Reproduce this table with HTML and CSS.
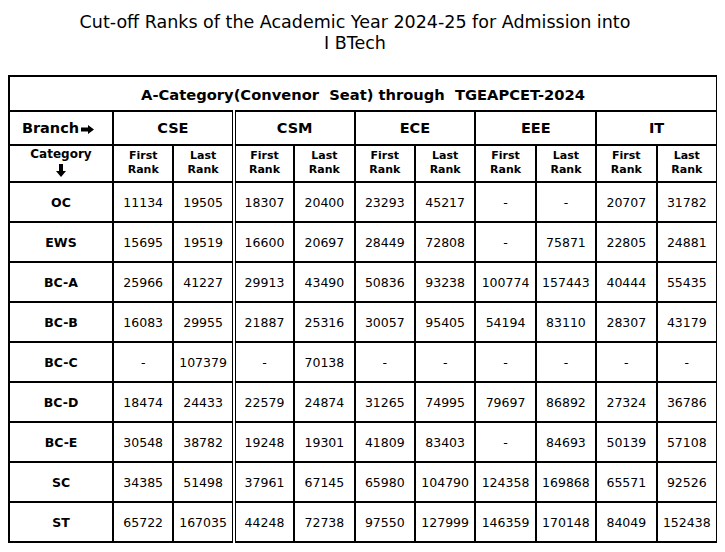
FILE: index.html
```html
<!DOCTYPE html>
<html>
<head>
<meta charset="utf-8">
<link rel="stylesheet" href="styles.css">
</head>
<body>
<h1 class="title">Cut-off Ranks of the Academic Year 2024-25 for Admission into<br>I BTech</h1>
<table class="ranks">
  <colgroup>
    <col class="c-cat">
    <col span="10" class="c-num">
  </colgroup>
  <tr class="r-title">
    <th colspan="11">A-Category(Convenor&nbsp; Seat) through&nbsp; TGEAPCET-2024</th>
  </tr>
  <tr class="r-branch">
    <th class="branch">Branch<svg class="arr-r" viewBox="0 0 13 9" width="13" height="9"><path d="M0 2.5h7V0l6 4.5-6 4.5V6.5H0z"/></svg></th>
    <th colspan="2" class="dbl">CSE</th>
    <th colspan="2">CSM</th>
    <th colspan="2">ECE</th>
    <th colspan="2">EEE</th>
    <th colspan="2">IT</th>
  </tr>
  <tr class="r-sub">
    <th class="cat">Category<br><svg class="arr-d" viewBox="0 0 10 13" width="10" height="13"><path d="M3 0h4v7h3l-5 6-5-6h3z"/></svg></th>
    <th>First<br>Rank</th><th class="dbl">Last<br>Rank</th>
    <th>First<br>Rank</th><th>Last<br>Rank</th>
    <th>First<br>Rank</th><th>Last<br>Rank</th>
    <th>First<br>Rank</th><th>Last<br>Rank</th>
    <th>First<br>Rank</th><th>Last<br>Rank</th>
  </tr>
  <tr><th>OC</th><td>11134</td><td class="dbl">19505</td><td>18307</td><td>20400</td><td>23293</td><td>45217</td><td>-</td><td>-</td><td>20707</td><td>31782</td></tr>
  <tr><th>EWS</th><td>15695</td><td class="dbl">19519</td><td>16600</td><td>20697</td><td>28449</td><td>72808</td><td>-</td><td>75871</td><td>22805</td><td>24881</td></tr>
  <tr><th>BC-A</th><td>25966</td><td class="dbl">41227</td><td>29913</td><td>43490</td><td>50836</td><td>93238</td><td>100774</td><td>157443</td><td>40444</td><td>55435</td></tr>
  <tr><th>BC-B</th><td>16083</td><td class="dbl">29955</td><td>21887</td><td>25316</td><td>30057</td><td>95405</td><td>54194</td><td>83110</td><td>28307</td><td>43179</td></tr>
  <tr><th>BC-C</th><td>-</td><td class="dbl">107379</td><td>-</td><td>70138</td><td>-</td><td>-</td><td>-</td><td>-</td><td>-</td><td>-</td></tr>
  <tr><th>BC-D</th><td>18474</td><td class="dbl">24433</td><td>22579</td><td>24874</td><td>31265</td><td>74995</td><td>79697</td><td>86892</td><td>27324</td><td>36786</td></tr>
  <tr><th>BC-E</th><td>30548</td><td class="dbl">38782</td><td>19248</td><td>19301</td><td>41809</td><td>83403</td><td>-</td><td>84693</td><td>50139</td><td>57108</td></tr>
  <tr><th>SC</th><td>34385</td><td class="dbl">51498</td><td>37961</td><td>67145</td><td>65980</td><td>104790</td><td>124358</td><td>169868</td><td>65571</td><td>92526</td></tr>
  <tr><th>ST</th><td>65722</td><td class="dbl">167035</td><td>44248</td><td>72738</td><td>97550</td><td>127999</td><td>146359</td><td>170148</td><td>84049</td><td>152438</td></tr>
</table>
</body>
</html>
```
FILE: styles.css
```css
html, body {
  background: #fff;
}
body {
  margin: 8px;
  color: #000;
  font-family: "DejaVu Sans", Verdana, sans-serif;
}
.title {
  margin: 0 0 21px;
  padding: 4px 15px 0 0;
  font-family: "DejaVu Sans", sans-serif;
  font-weight: normal;
  font-size: 17.5px;
  line-height: 21px;
  text-align: center;
}
.ranks {
  width: 710px;
  table-layout: fixed;
  border-collapse: collapse;
  border: 2px solid #000;
}
.c-cat { width: 104px; }
.ranks th, .ranks td {
  border: 2px solid #000;
  padding: 0;
  text-align: center;
  vertical-align: middle;
}
.ranks td {
  font-size: 12.5px;
  font-weight: normal;
}
.ranks th {
  font-size: 12.5px;
  font-weight: bold;
}
.ranks .dbl {
  border-right: 4px double #000;
}
.r-title { height: 35px; }
.r-title th { font-size: 14.7px; padding-top: 2px; }
.r-branch { height: 34px; }
.r-branch th { font-size: 14.5px; }
.r-branch th.branch { padding-right: 6px; }
.r-sub { height: 37px; }
.r-sub th { font-size: 11px; line-height: 14px; vertical-align: top; padding-top: 3px; }
.r-sub th.cat { font-size: 12px; line-height: 15px; padding-top: 1px; }
.ranks tr:nth-child(n+4) { height: 40px; }
.arr-r { vertical-align: -1px; margin-left: 2px; }
.arr-d { display: inline-block; margin-top: 2px; }
```
